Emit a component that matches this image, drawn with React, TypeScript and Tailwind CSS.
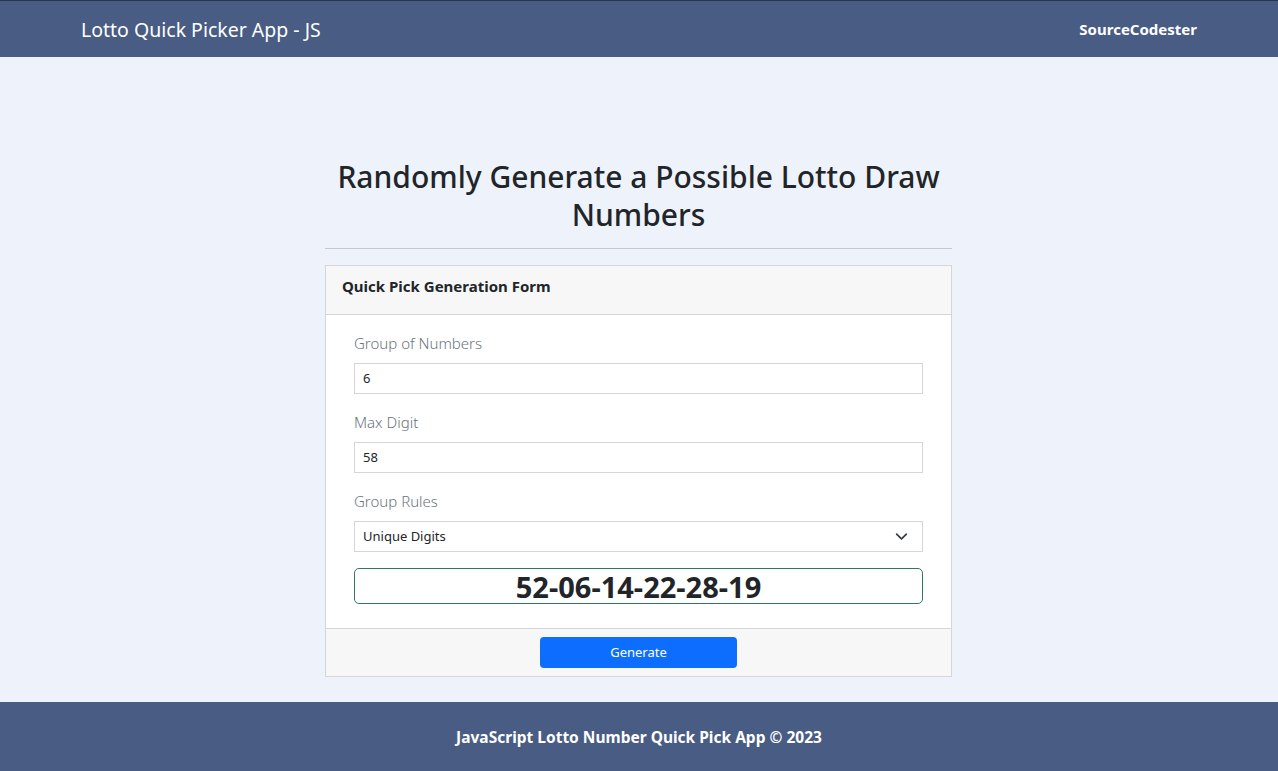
import React from "react";

export default function App() {
  return (
    <div className="min-h-[771px] flex flex-col bg-[#eef3fb] text-[#212529]" style={{ fontFamily: '"Noto Sans", "Open Sans", sans-serif' }}>
      <nav className="h-[57px] bg-[#485c84] border-t border-[#2a3550] flex items-center justify-between px-[81px] pt-[1px] shrink-0">
        <span className="text-white text-[19.5px]">Lotto Quick Picker App - JS</span>
        <span className="text-white text-[15px] font-bold">SourceCodester</span>
      </nav>
      <main className="flex-1 flex justify-center pt-[101px] pr-[1px]">
        <div className="w-[627px] flex flex-col">
          <h1 className="text-[30px] leading-[38px] font-medium text-center text-[#212529]">
            Randomly Generate a Possible Lotto Draw Numbers
          </h1>
          <hr className="mt-[14px] border-t border-[#c4c8cf]" />
          <div className="mt-[16px] border border-[#d4d6d9] bg-white">
            <div className="h-[49px] bg-[#f7f7f7] border-b border-[#d4d6d9] flex items-start pt-[9px] px-4">
              <span className="text-[15px] font-bold">Quick Pick Generation Form</span>
            </div>
            <div className="px-[28px] pt-[17px] pb-[24px] flex flex-col">
              <label className="text-[15px] font-light text-[#6c757d] leading-[22px]">Group of Numbers</label>
              <div className="mt-[9px] h-[31px] border border-[#d4d6d9] flex items-center px-2 text-[13px]">6</div>
              <label className="mt-[17px] text-[15px] font-light text-[#6c757d] leading-[22px]">Max Digit</label>
              <div className="mt-[9px] h-[31px] border border-[#d4d6d9] flex items-center px-2 text-[13px]">58</div>
              <label className="mt-[17px] text-[15px] font-light text-[#6c757d] leading-[22px]">Group Rules</label>
              <div className="mt-[9px] h-[31px] border border-[#d4d6d9] flex items-center justify-between px-2 pr-[14px] text-[13px]">
                <span>Unique Digits</span>
                <svg width="13" height="13" viewBox="0 0 16 16" fill="none" stroke="#343a40" strokeWidth="2" strokeLinecap="round" strokeLinejoin="round">
                  <path d="M2 5l6 6 6-6" />
                </svg>
              </div>
              <div className="mt-[16px] h-[36px] border border-[#2f7a5c] rounded-[5px] flex items-center justify-center">
                <span className="text-[29px] font-bold leading-none">52-06-14-22-28-19</span>
              </div>
            </div>
            <div className="h-[48px] bg-[#f7f7f7] border-t border-[#d4d6d9] flex items-center justify-center">
              <button className="w-[197px] h-[31px] bg-[#0d6efd] text-white text-[13px] rounded-[4px]">Generate</button>
            </div>
          </div>
        </div>
      </main>
      <footer className="h-[69px] bg-[#485c84] flex items-center justify-center pt-[3px] shrink-0">
        <span className="text-white text-[15.5px] font-bold">JavaScript Lotto Number Quick Pick App © 2023</span>
      </footer>
    </div>
  );
}
